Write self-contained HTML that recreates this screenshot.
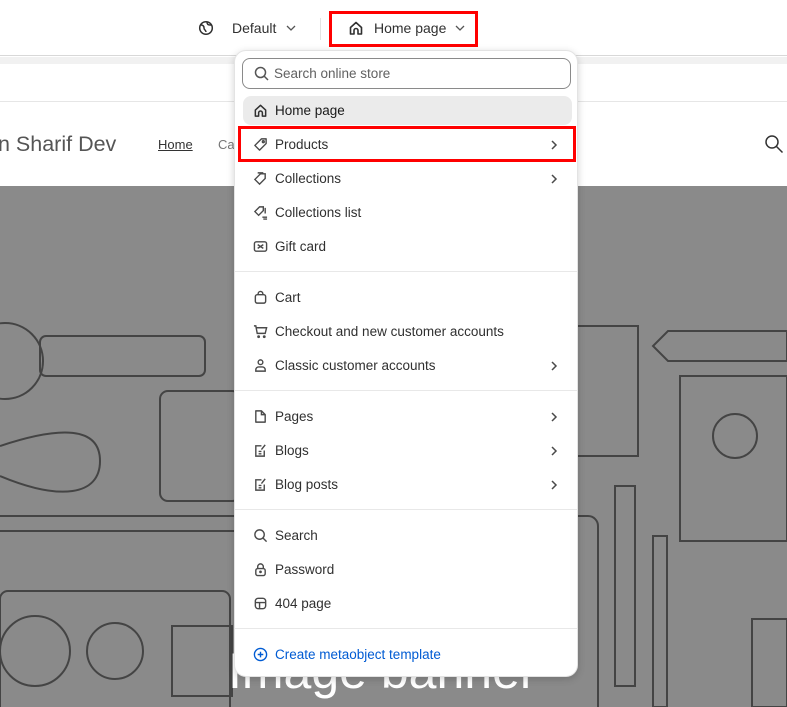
<!DOCTYPE html>
<html><head><style>
*{margin:0;padding:0;box-sizing:border-box}
body{width:787px;height:707px;overflow:hidden;position:relative;background:#fff;font-family:"Liberation Sans",sans-serif;color:#303030}
.abs{position:absolute}
.topbar{left:0;top:0;width:787px;height:56px;background:#fff;border-bottom:1px solid #d8d8d8}
.strip{left:0;top:57px;width:787px;height:7px;background:#f1f1f1}
.hdr{left:0;top:101px;width:787px;height:85px;border-top:1px solid #e6e6e6;background:#fff}
.banner{left:0;top:186px;width:787px;height:521px;background:#8a8a8a;overflow:hidden}
.dd{left:234px;top:50px;width:344px;height:627px;background:#fff;border-radius:12px;box-shadow:0 2px 8px rgba(0,0,0,.18);border:1px solid #e3e3e3}
.row{position:absolute;left:8px;width:329px;height:29px;font-size:13.5px;line-height:29px;padding-left:32px;color:#303030}
.row svg.i{position:absolute;left:10px;top:7px}
.row .ch{position:absolute;right:14px;top:9px}
.div{position:absolute;left:0;width:342px;height:1px;background:#e8e8e8}
</style></head><body>
<div class="abs topbar">
 <svg class="abs" style="left:198px;top:20px" width="16" height="16" viewBox="0 0 16 16" fill="none" stroke="#303030" stroke-width="1.5"><circle cx="8" cy="8" r="6.3"/><path d="M3 5c2 0 3 1 3 3s2 2 2 4M9 2c0 2 1 3 3 3h2"/></svg>
 <div class="abs" style="left:232px;top:20px;font-size:14px;color:#303030">Default</div>
 <svg class="abs" style="left:286px;top:24px" width="10" height="8" viewBox="0 0 10 8" fill="none" stroke="#555" stroke-width="1.3"><path d="M1 2l4 4 4-4"/></svg>
 <div class="abs" style="left:320px;top:18px;width:1px;height:22px;background:#e3e3e3"></div>
 <div class="abs" style="left:329px;top:11px;width:149px;height:36px;border:3px solid #f00"></div>
 <svg class="abs" style="left:348px;top:20px" width="16" height="16" viewBox="0 0 16 16" fill="none" stroke="#303030" stroke-width="1.6"><path d="M2.5 7.5L8 2.5l5.5 5V14h-3.5v-3.5a2 2 0 0 0-4 0V14H2.5z" stroke-linejoin="round"/></svg>
 <div class="abs" style="left:374px;top:20px;font-size:14px;color:#303030">Home page</div>
 <svg class="abs" style="left:455px;top:24px" width="10" height="8" viewBox="0 0 10 8" fill="none" stroke="#555" stroke-width="1.3"><path d="M1 2l4 4 4-4"/></svg>
</div>
<div class="abs strip"></div>
<div class="abs hdr">
 <div class="abs" style="left:-2px;top:30px;font-size:21.5px;color:#555">n Sharif Dev</div>
 <div class="abs" style="left:158px;top:35px;font-size:13px;color:#333;text-decoration:underline">Home</div>
 <div class="abs" style="left:218px;top:35px;font-size:13px;color:#777">Ca</div>
 <svg class="abs" style="left:764px;top:32px" width="20" height="20" viewBox="0 0 20 20" fill="none" stroke="#333" stroke-width="1.5"><circle cx="8" cy="8" r="6"/><path d="M12.5 12.5l6 6"/></svg>
</div>
<div class="abs banner">
 <svg width="787" height="521" fill="none" stroke="#444" stroke-width="2">
  <circle cx="5" cy="175" r="38"/><rect x="40" y="150" width="165" height="40" rx="6"/>
  <rect x="160" y="205" width="80" height="110" rx="8"/>
  <path d="M0 260c60-20 100-20 100 15s-40 40-100 15"/>
  <path d="M0 330h240M0 345h240"/>
  <rect x="0" y="405" width="230" height="140" rx="8"/><circle cx="35" cy="465" r="35"/><circle cx="115" cy="465" r="28"/>
  <rect x="172" y="440" width="60" height="70"/>
  <path d="M578 140h60v130h-60M668 145h119v30H668l-15-15z"/>
  <rect x="680" y="190" width="107" height="165"/><circle cx="735" cy="250" r="22"/>
  <rect x="615" y="300" width="20" height="200"/><rect x="653" y="350" width="14" height="171"/>
  <path d="M578 330h10a10 10 0 0 1 10 10v181"/>
  <rect x="752" y="433" width="35" height="88"/>
 </svg>
 <div class="abs" style="left:228px;top:456px;font-size:50px;color:#fff;font-family:'Liberation Sans',sans-serif">Image banner</div>
</div>

<div class="abs dd">
 <div class="abs" style="left:7px;top:7px;width:329px;height:31px;border:1px solid #8a8a8a;border-radius:8px"></div>
 <svg class="abs" style="left:19px;top:15px" width="15" height="15" viewBox="0 0 15 15" fill="none" stroke="#555" stroke-width="1.5"><circle cx="6.5" cy="6.5" r="5"/><path d="M10 10l4 4"/></svg>
 <div class="abs" style="left:39px;top:15px;font-size:13.5px;color:#616161">Search online store</div>

 <div class="row" style="top:45px;background:#ebebeb;border-radius:8px;color:#1a1a1a"><svg class="i" width="15" height="15" viewBox="0 0 16 16" fill="none" stroke="#303030" stroke-width="1.6"><path d="M2.5 7.5L8 2.5l5.5 5V14h-3.5v-3.5a2 2 0 0 0-4 0V14H2.5z" stroke-linejoin="round"/></svg>Home page</div>
 <div class="row" style="top:79px"><svg class="i" width="15" height="15" viewBox="0 0 16 16" fill="none" stroke="#4a4a4a" stroke-width="1.5"><path d="M9 2h5v5l-7 7-5-5z" stroke-linejoin="round"/><circle cx="11" cy="5" r="1"/></svg>Products<svg class="ch" width="8" height="12" viewBox="0 0 8 12" fill="none" stroke="#4a4a4a" stroke-width="1.5"><path d="M2 2l4 4-4 4"/></svg></div>
 <div class="abs" style="left:3px;top:75px;width:338px;height:36px;border:3px solid #f00"></div>
 <div class="row" style="top:113px"><svg class="i" width="15" height="15" viewBox="0 0 16 16" fill="none" stroke="#4a4a4a" stroke-width="1.5"><path d="M8 3h5v5l-6 6-5-5zM5 2h6"/></svg>Collections<svg class="ch" width="8" height="12" viewBox="0 0 8 12" fill="none" stroke="#4a4a4a" stroke-width="1.5"><path d="M2 2l4 4-4 4"/></svg></div>
 <div class="row" style="top:147px"><svg class="i" width="15" height="15" viewBox="0 0 16 16" fill="none" stroke="#4a4a4a" stroke-width="1.5"><path d="M7 2h4v4l-5 5-4-4zM13 3v6M10 13h5M11 15h4"/></svg>Collections list</div>
 <div class="row" style="top:181px"><svg class="i" width="15" height="15" viewBox="0 0 16 16" fill="none" stroke="#4a4a4a" stroke-width="1.5"><rect x="1.5" y="3" width="13" height="10" rx="2"/><path d="M5 6l6 4M11 6l-6 4"/></svg>Gift card</div>
 <div class="div" style="top:220px"></div>
 <div class="row" style="top:232px"><svg class="i" width="15" height="15" viewBox="0 0 16 16" fill="none" stroke="#4a4a4a" stroke-width="1.5"><rect x="2.5" y="5" width="11" height="9" rx="2"/><path d="M5.5 5V4a2.5 2.5 0 0 1 5 0v1"/></svg>Cart</div>
 <div class="row" style="top:266px"><svg class="i" width="15" height="15" viewBox="0 0 16 16" fill="none" stroke="#4a4a4a" stroke-width="1.5"><path d="M1 2h2l1.5 8h8.5l1.5-6H4"/><circle cx="6" cy="13.5" r=".8"/><circle cx="12" cy="13.5" r=".8"/></svg>Checkout and new customer accounts</div>
 <div class="row" style="top:300px"><svg class="i" width="15" height="15" viewBox="0 0 16 16" fill="none" stroke="#4a4a4a" stroke-width="1.5"><circle cx="8" cy="4.5" r="2.5"/><path d="M3 14v-1.5a3 3 0 0 1 3-3h4a3 3 0 0 1 3 3V14z"/></svg>Classic customer accounts<svg class="ch" width="8" height="12" viewBox="0 0 8 12" fill="none" stroke="#4a4a4a" stroke-width="1.5"><path d="M2 2l4 4-4 4"/></svg></div>
 <div class="div" style="top:339px"></div>
 <div class="row" style="top:351px"><svg class="i" width="15" height="15" viewBox="0 0 16 16" fill="none" stroke="#4a4a4a" stroke-width="1.5"><path d="M3 2h6l4 4v8H3z" stroke-linejoin="round"/><path d="M9 2v4h4"/></svg>Pages<svg class="ch" width="8" height="12" viewBox="0 0 8 12" fill="none" stroke="#4a4a4a" stroke-width="1.5"><path d="M2 2l4 4-4 4"/></svg></div>
 <div class="row" style="top:385px"><svg class="i" width="15" height="15" viewBox="0 0 16 16" fill="none" stroke="#4a4a4a" stroke-width="1.5"><path d="M9 3H3v11h9V8M6 9h3M6 11.5h3M9 7l4-5"/></svg>Blogs<svg class="ch" width="8" height="12" viewBox="0 0 8 12" fill="none" stroke="#4a4a4a" stroke-width="1.5"><path d="M2 2l4 4-4 4"/></svg></div>
 <div class="row" style="top:419px"><svg class="i" width="15" height="15" viewBox="0 0 16 16" fill="none" stroke="#4a4a4a" stroke-width="1.5"><path d="M9 3H3v11h9V8M6 9h3M6 11.5h3M9 7l4-5"/></svg>Blog posts<svg class="ch" width="8" height="12" viewBox="0 0 8 12" fill="none" stroke="#4a4a4a" stroke-width="1.5"><path d="M2 2l4 4-4 4"/></svg></div>
 <div class="div" style="top:458px"></div>
 <div class="row" style="top:470px"><svg class="i" width="15" height="15" viewBox="0 0 16 16" fill="none" stroke="#4a4a4a" stroke-width="1.5"><circle cx="7" cy="7" r="5"/><path d="M10.5 10.5l4 4"/></svg>Search</div>
 <div class="row" style="top:504px"><svg class="i" width="15" height="15" viewBox="0 0 16 16" fill="none" stroke="#4a4a4a" stroke-width="1.5"><rect x="3" y="7" width="10" height="7.5" rx="2"/><path d="M5 7V5a3 3 0 0 1 6 0v2"/><circle cx="8" cy="10.5" r=".7"/></svg>Password</div>
 <div class="row" style="top:538px"><svg class="i" width="15" height="15" viewBox="0 0 16 16" fill="none" stroke="#4a4a4a" stroke-width="1.5"><rect x="2.5" y="2.5" width="11" height="11" rx="3"/><path d="M2.5 7h11M7 7v6.5"/></svg>404 page</div>
 <div class="div" style="top:577px"></div>
 <div class="row" style="top:589px;color:#005bd3"><svg class="i" width="15" height="15" viewBox="0 0 16 16" fill="none" stroke="#005bd3" stroke-width="1.5"><circle cx="8" cy="8" r="6.5"/><path d="M8 5v6M5 8h6"/></svg>Create metaobject template</div>
</div>
</body></html>
